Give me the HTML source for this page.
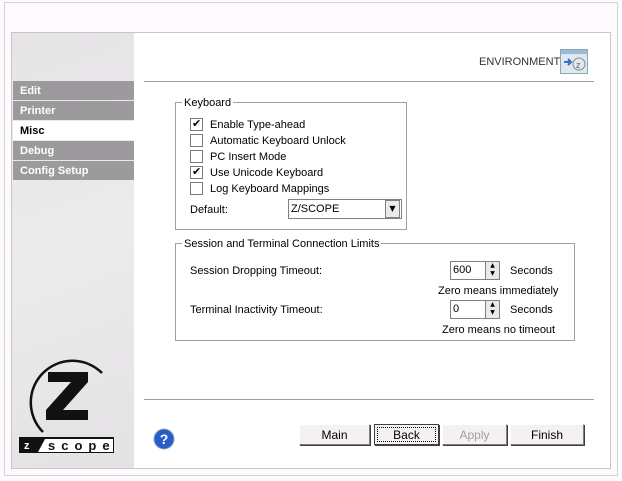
<!DOCTYPE html>
<html><head><style>
body{margin:0;width:622px;height:481px;background:#fdfbfd;font-family:"Liberation Sans",Arial,sans-serif;font-size:11px;color:#000;position:relative;overflow:hidden}
.a{position:absolute}
.t{position:absolute;margin-top:1px}
.menu{position:absolute;left:13px;width:121px;height:19px;background:#9c9a9c;color:#fff;font-weight:bold;font-size:11px;line-height:21px;padding-left:7px;box-sizing:border-box}
.cb{position:absolute;width:13px;height:13px;border:1px solid #7a7a7a;background:#fff;left:190px;box-sizing:border-box}
.cb.c::after{content:"✔";position:absolute;left:1px;top:-2px;font-size:11px;font-family:"DejaVu Sans"}
.lbl{position:absolute;left:210px;margin-top:1px}
.btn{position:absolute;top:424px;height:21px;background:#f4f0f4;border:1px solid;border-color:#fff #808080 #808080 #fff;box-shadow:1px 1px 0 #404040;text-align:center;line-height:20px;box-sizing:border-box;font-size:12px}
.spin{position:absolute;width:36px;height:19px;border:1px solid #808080;border-right:none;background:#fff;box-sizing:border-box;line-height:17px;padding-left:2px}
.arr{position:absolute;width:15px;height:19px;background:#ece9ec;border:1px solid #808080;box-sizing:border-box;font-size:6px;line-height:8px;text-align:center;font-family:"DejaVu Sans"}
</style></head><body>
<div class="a" style="left:4px;top:2px;width:614px;height:474px;border:1px solid #d4d0d4;box-sizing:border-box"></div>
<div class="a" style="left:11px;top:32px;width:600px;height:437px;border:1px solid #c8c4c8;background:#fff;box-sizing:border-box"></div>
<div class="a" style="left:12px;top:33px;width:122px;height:435px;background:linear-gradient(160deg,#e6e4e6,#ecebec 50%,#e4e2e4)"></div>
<div class="menu" style="top:81px">Edit</div>
<div class="menu" style="top:101px">Printer</div>
<div class="menu" style="top:121px;background:#fff;color:#000">Misc</div>
<div class="menu" style="top:141px">Debug</div>
<div class="menu" style="top:161px">Config Setup</div>
<svg class="a" style="left:18px;top:350px" width="100" height="105">
<path d="M84 23 A38 38 0 1 0 25 82" fill="none" stroke="#111" stroke-width="2.5"/>
<path d="M30 22 L70 22 L70 32 L45 60 L70 60 L70 70 L28 70 L28 60 L53 32 L30 32Z" fill="#111"/>
<rect x="1" y="87" width="95" height="16" fill="#111"/>
<text x="6" y="99" fill="#fff" font-family="Liberation Sans" font-weight="bold" font-size="11">z</text>
<polygon points="20,102 27,89 95,89 95,102" fill="#fff"/>
<text x="30" y="100" fill="#111" font-family="Liberation Sans" font-weight="bold" font-size="13" letter-spacing="6">scope</text>
</svg>
<div class="a" style="left:144px;top:81px;width:450px;height:1px;background:#a0a0a0"></div>
<div class="t" style="left:479px;top:55px;color:#333">ENVIRONMENT</div>
<svg class="a" style="left:560px;top:49px" width="28" height="25"><rect x="0.5" y="0.5" width="27" height="24" fill="#dfe8f0" stroke="#8aa"/><rect x="1" y="1" width="26" height="4" fill="#9bbbd8"/><path d="M4 13h7M8 10l3 3-3 3" stroke="#3070c0" stroke-width="2" fill="none"/><circle cx="19" cy="15" r="6" fill="none" stroke="#888"/><text x="16" y="19" font-size="9" fill="#666">z</text></svg>
<div class="a" style="left:175px;top:102px;width:232px;height:128px;border:1px solid #a0a0a0;box-sizing:border-box"></div>
<div class="t" style="left:182px;top:96px;background:#fff;padding:0 2px">Keyboard</div>
<div class="cb c" style="top:118px"></div><div class="lbl" style="top:118px">Enable Type-ahead</div>
<div class="cb" style="top:134px"></div><div class="lbl" style="top:134px">Automatic Keyboard Unlock</div>
<div class="cb" style="top:150px"></div><div class="lbl" style="top:150px">PC Insert Mode</div>
<div class="cb c" style="top:166px"></div><div class="lbl" style="top:166px">Use Unicode Keyboard</div>
<div class="cb" style="top:182px"></div><div class="lbl" style="top:182px">Log Keyboard Mappings</div>
<div class="t" style="left:190px;top:203px">Default:</div>
<div class="a" style="left:288px;top:199px;width:114px;height:20px;border:1px solid #808080;box-sizing:border-box;line-height:19px;padding-left:2px">Z/SCOPE</div>
<div class="arr" style="left:385px;top:200px;height:18px;line-height:16px;font-size:8px">▼</div>
<div class="a" style="left:175px;top:243px;width:400px;height:98px;border:1px solid #a0a0a0;box-sizing:border-box"></div>
<div class="t" style="left:182px;top:237px;background:#fff;padding:0 2px">Session and Terminal Connection Limits</div>
<div class="t" style="left:190px;top:264px">Session Dropping Timeout:</div>
<div class="spin" style="left:450px;top:261px">600</div><div class="arr" style="left:485px;top:261px">▲<br>▼</div>
<div class="t" style="left:510px;top:264px">Seconds</div>
<div class="t" style="left:438px;top:284px">Zero means immediately</div>
<div class="t" style="left:190px;top:303px">Terminal Inactivity Timeout:</div>
<div class="spin" style="left:450px;top:300px">0</div><div class="arr" style="left:485px;top:300px">▲<br>▼</div>
<div class="t" style="left:510px;top:303px">Seconds</div>
<div class="t" style="left:442px;top:323px">Zero means no timeout</div>
<div class="a" style="left:144px;top:399px;width:450px;height:1px;background:#a0a0a0"></div>
<svg class="a" style="left:153px;top:428px" width="22" height="22"><circle cx="11" cy="11" r="10" fill="#2a5cc8" stroke="#8ab" /><text x="11" y="16" text-anchor="middle" fill="#fff" font-weight="bold" font-size="14" font-family="Liberation Sans">?</text></svg>
<div class="btn" style="left:299px;width:71px">Main</div>
<div class="btn" style="left:374px;width:65px;border:1px solid #404040;outline:1px dotted #000;outline-offset:-4px">Back</div>
<div class="btn" style="left:442px;width:65px;color:#a0a0a0">Apply</div>
<div class="btn" style="left:510px;width:74px">Finish</div>
</body></html>
